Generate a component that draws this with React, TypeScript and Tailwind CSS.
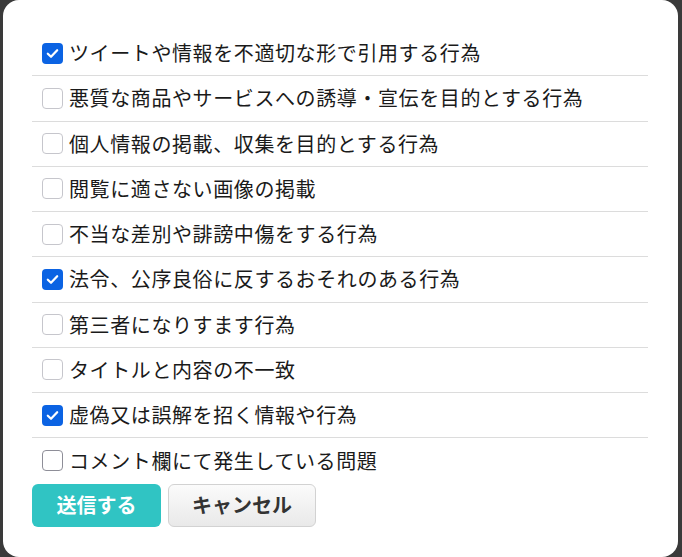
import React from "react";

const items: { label: string; checked: boolean; dark?: boolean }[] = [
  { label: "ツイートや情報を不適切な形で引用する行為", checked: true },
  { label: "悪質な商品やサービスへの誘導・宣伝を目的とする行為", checked: false },
  { label: "個人情報の掲載、収集を目的とする行為", checked: false },
  { label: "閲覧に適さない画像の掲載", checked: false },
  { label: "不当な差別や誹謗中傷をする行為", checked: false },
  { label: "法令、公序良俗に反するおそれのある行為", checked: true },
  { label: "第三者になりすます行為", checked: false },
  { label: "タイトルと内容の不一致", checked: false },
  { label: "虚偽又は誤解を招く情報や行為", checked: true },
  { label: "コメント欄にて発生している問題", checked: false, dark: true },
];

function Box({ checked, dark }: { checked: boolean; dark?: boolean }) {
  if (checked) {
    return (
      <span className="w-[21px] h-[21px] rounded-[4px] bg-[#0b63e3] flex items-center justify-center shrink-0">
        <svg width="15" height="15" viewBox="0 0 16 16" fill="none">
          <path d="M3 8.3 L6.4 11.5 L13 4.6" stroke="white" strokeWidth="2.4" strokeLinecap="round" strokeLinejoin="round" />
        </svg>
      </span>
    );
  }
  return (
    <span
      className={
        dark
          ? "w-[21px] h-[21px] rounded-[4px] border-[1.5px] border-[#8e8e98] bg-white shrink-0"
          : "w-[21px] h-[21px] rounded-[4px] border-[1.5px] border-[#c6c6cc] bg-white shrink-0"
      }
    />
  );
}

export default function App() {
  return (
    <div
      className="w-[682px] h-[557px] bg-[#3a3a3a] flex pl-[3px] pr-[4px] overflow-hidden"
      style={{ fontFamily: '"Noto Sans CJK JP", "Noto Sans", sans-serif' }}
    >
      <div className="flex-1 bg-white rounded-[16px] pt-[31px] pl-[29px] pr-[30px] pb-[31px] flex flex-col">
        <div className="flex flex-col">
          {items.map((it, i) => (
            <div
              key={i}
              className={
                i < items.length - 1
                  ? "h-[45.25px] border-b border-[#dcdcdc] flex items-center gap-[6px] pl-[10px]"
                  : "h-[45.25px] flex items-center gap-[6px] pl-[10px]"
              }
            >
              <Box checked={it.checked} dark={it.dark} />
              <span className="text-[20px] leading-none text-[#1a1a1a] tracking-[0.6px]">{it.label}</span>
            </div>
          ))}
        </div>
        <div className="flex gap-[7px]">
          <button className="w-[129px] h-[43px] rounded-[6px] bg-[#30c4c3] text-white text-[20px] font-bold flex items-center justify-center">
            送信する
          </button>
          <button className="w-[148px] h-[43px] rounded-[6px] border border-[#d2d2d2] bg-gradient-to-b from-[#fbfbfb] to-[#e9e9e9] text-[#333] text-[20px] font-bold flex items-center justify-center">
            キャンセル
          </button>
        </div>
      </div>
    </div>
  );
}
